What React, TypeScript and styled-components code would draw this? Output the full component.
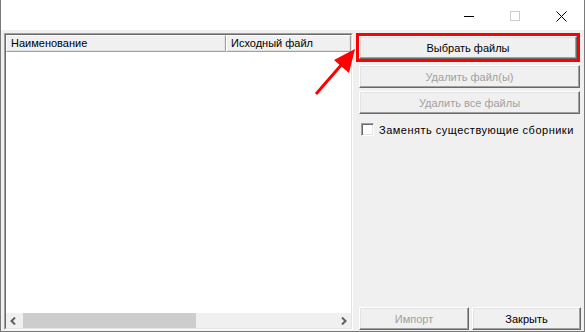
import styled, { createGlobalStyle } from "styled-components";

const GlobalStyle = createGlobalStyle`
  html, body {
    margin: 0;
    padding: 0;
    background: #ffffff;
  }
  body {
    font-family: "Liberation Sans", Arial, sans-serif;
    font-size: 11px;
    color: #000000;
  }
  * {
    box-sizing: border-box;
  }
`;

const Window = styled.div`
  position: relative;
  width: 585px;
  height: 332px;
  border: 1px solid #7a7a7a;
  border-top: none;
  display: flex;
  flex-direction: column;
  background: #f0f0f0;
  overflow: hidden;
`;

const TitleBar = styled.div`
  height: 30px;
  background: #ffffff;
  display: flex;
  justify-content: flex-end;
  align-items: stretch;
`;

const CaptionButton = styled.div`
  width: 46px;
  display: flex;
  align-items: center;
  justify-content: center;
  padding-top: 2px;
`;

const Body = styled.div`
  flex: 1;
  display: flex;
  padding: 3px 3px 1px 3px;
  min-height: 0;
`;

const ListView = styled.div`
  width: 349px;
  display: flex;
  flex-direction: column;
  border: 1px solid;
  border-color: #a0a0a0 #ffffff #ffffff #a0a0a0;
`;

const ListInner = styled.div`
  flex: 1;
  display: flex;
  flex-direction: column;
  border: 1px solid;
  border-color: #696969 #e3e3e3 #e3e3e3 #696969;
  background: #ffffff;
  min-height: 0;
`;

const HeaderRow = styled.div`
  display: flex;
  height: 17px;
  background: #ffffff;
`;

const HeaderCell = styled.div<{ $w: number }>`
  width: ${({ $w }) => $w}px;
  height: 17px;
  line-height: 15px;
  padding-left: 4px;
  background: #f0f0f0;
  border: 1px solid;
  border-color: #ffffff #a0a0a0 #a0a0a0 #ffffff;
  box-shadow: inset -1px -1px 0 #e3e3e3;
  white-space: nowrap;
  overflow: hidden;
`;

const ListBody = styled.div`
  flex: 1;
  background: #ffffff;
`;

const HScroll = styled.div`
  height: 15px;
  display: flex;
  background: #f0f0f0;
`;

const ScrollArrow = styled.div`
  width: 15px;
  display: flex;
  align-items: center;
  justify-content: center;
`;

const ScrollTrack = styled.div`
  flex: 1;
  display: flex;
  padding: 0 2px;
`;

const ScrollThumb = styled.div`
  width: 173px;
  background: #cdcdcd;
`;

const RightPanel = styled.div`
  flex: 1;
  margin-left: 3px;
  display: flex;
  flex-direction: column;
`;

const Highlight = styled.div`
  border: 3px solid #ff0000;
  margin-right: 1px;
`;

const Button = styled.div<{ $disabled?: boolean }>`
  height: 23px;
  display: flex;
  align-items: center;
  justify-content: center;
  background: #f0f0f0;
  color: ${({ $disabled }) => ($disabled ? "#a0a0a0" : "#000000")};
  border: 1px solid;
  border-color: #ffffff #696969 #696969 #ffffff;
  box-shadow: inset -1px -1px 0 #a0a0a0, inset 1px 1px 0 #e3e3e3;
  white-space: nowrap;
`;

const ActionButton = styled(Button)`
  margin: 3px 1px 0 3px;
`;

const CheckRow = styled.label`
  display: flex;
  align-items: center;
  gap: 5px;
  margin: 9px 0 0 5px;
`;

const CheckBox = styled.span`
  width: 13px;
  height: 13px;
  background: #ffffff;
  border: 1px solid;
  border-color: #a0a0a0 #ffffff #ffffff #a0a0a0;
  box-shadow: inset 1px 1px 0 #696969, inset -1px -1px 0 #e3e3e3;
`;

const CheckText = styled.span`
  letter-spacing: 0.5px;
  white-space: nowrap;
`;

const Spacer = styled.div`
  flex: 1;
`;

const BottomRow = styled.div`
  display: flex;
  gap: 3px;
  margin-left: 3px;
`;

const BottomButton = styled(Button)<{ $w: number }>`
  width: ${({ $w }) => $w}px;
`;

const ArrowOverlay = styled.svg`
  position: absolute;
  left: 0;
  top: 0;
  pointer-events: none;
`;

export default function App() {
  return (
    <>
      <GlobalStyle />
      <Window>
        <TitleBar>
          <CaptionButton>
            <svg width="10" height="10" viewBox="0 0 10 10">
              <line x1="0" y1="5.5" x2="10" y2="5.5" stroke="#000" strokeWidth="1" />
            </svg>
          </CaptionButton>
          <CaptionButton>
            <svg width="10" height="10" viewBox="0 0 10 10">
              <rect x="0.5" y="0.5" width="9" height="9" fill="none" stroke="#cccccc" strokeWidth="1" />
            </svg>
          </CaptionButton>
          <CaptionButton>
            <svg width="11" height="11" viewBox="0 0 11 11">
              <path d="M0.5 0.5 L10.5 10.5 M10.5 0.5 L0.5 10.5" stroke="#000" strokeWidth="1" />
            </svg>
          </CaptionButton>
        </TitleBar>
        <Body>
          <ListView>
            <ListInner>
              <HeaderRow>
                <HeaderCell $w={220}>Наименование</HeaderCell>
                <HeaderCell $w={125}>Исходный файл</HeaderCell>
              </HeaderRow>
              <ListBody />
              <HScroll>
                <ScrollArrow>
                  <svg width="7" height="8" viewBox="0 0 7 8">
                    <path d="M5 0.5 L1.5 4 L5 7.5" fill="none" stroke="#606060" strokeWidth="2" />
                  </svg>
                </ScrollArrow>
                <ScrollTrack>
                  <ScrollThumb />
                </ScrollTrack>
                <ScrollArrow>
                  <svg width="7" height="8" viewBox="0 0 7 8">
                    <path d="M2 0.5 L5.5 4 L2 7.5" fill="none" stroke="#606060" strokeWidth="2" />
                  </svg>
                </ScrollArrow>
              </HScroll>
            </ListInner>
          </ListView>
          <RightPanel>
            <Highlight>
              <Button>Выбрать файлы</Button>
            </Highlight>
            <ActionButton $disabled>Удалить файл(ы)</ActionButton>
            <ActionButton $disabled>Удалить все файлы</ActionButton>
            <CheckRow>
              <CheckBox />
              <CheckText>Заменять существующие сборники</CheckText>
            </CheckRow>
            <Spacer />
            <BottomRow>
              <BottomButton $w={110} $disabled>
                Импорт
              </BottomButton>
              <BottomButton $w={109}>Закрыть</BottomButton>
            </BottomRow>
          </RightPanel>
        </Body>
        <ArrowOverlay width="585" height="332">
          <line x1="315" y1="94" x2="342" y2="63" stroke="#ff0000" strokeWidth="3" />
          <polygon points="354,49 348,73 333,60" fill="#ff0000" />
        </ArrowOverlay>
      </Window>
    </>
  );
}
